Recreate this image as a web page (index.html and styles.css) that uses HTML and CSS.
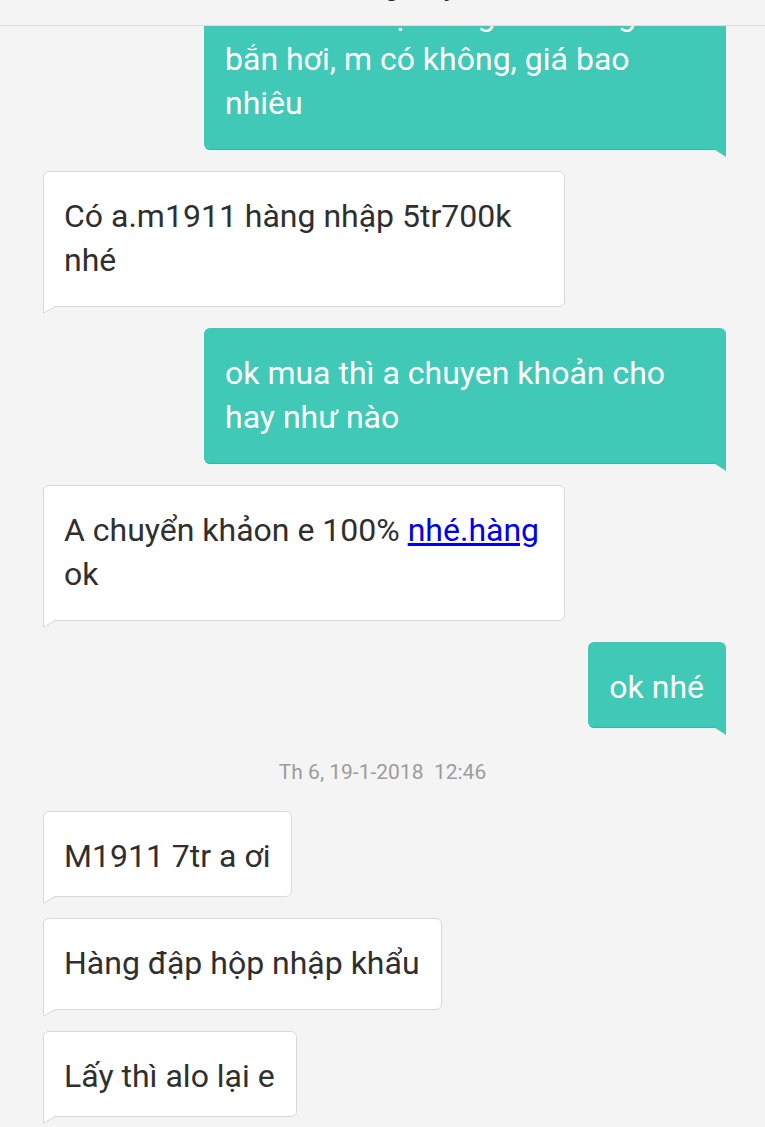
FILE: index.html
```html
<!DOCTYPE html>
<html lang="vi">
<head>
<meta charset="utf-8">
<title>Chat</title>
<link rel="stylesheet" href="styles.css">
</head>
<body>
<header class="topbar"><div class="topbar-text">Ừ, anh muốn hỏi xem súng này ạ, mình</div></header>
<main class="chat">
  <div class="row out">
    <div class="bubble sent tall">Cho a hỏi loại súng nào dùng<br>bắn hơi, m có không, giá bao<br>nhiêu<svg class="tail" width="14" height="9" viewBox="0 0 14 9"><polygon points="0,0 14,0 14,9" /></svg></div>
  </div>
  <div class="row in">
    <div class="bubble recv tall">Có a.m1911 hàng nhập 5tr700k<br>nhé<svg class="tail" width="14" height="9" viewBox="0 0 14 9"><polygon points="0.5,0 13.5,0 0.5,8" /><path d="M0.5,0 V8 L13,1.5" /></svg></div>
  </div>
  <div class="row out">
    <div class="bubble sent tall">ok mua thì a chuyen khoản cho<br>hay như nào<svg class="tail" width="14" height="9" viewBox="0 0 14 9"><polygon points="0,0 14,0 14,9" /></svg></div>
  </div>
  <div class="row in">
    <div class="bubble recv tall">A chuyển khảon e 100% <a class="link" href="#">nhé.hàng</a><br>ok<svg class="tail" width="14" height="9" viewBox="0 0 14 9"><polygon points="0.5,0 13.5,0 0.5,8" /><path d="M0.5,0 V8 L13,1.5" /></svg></div>
  </div>
  <div class="row out">
    <div class="bubble sent">ok nhé<svg class="tail" width="14" height="9" viewBox="0 0 14 9"><polygon points="0,0 14,0 14,9" /></svg></div>
  </div>
  <div class="stamp">Th 6, 19-1-2018&nbsp;&nbsp;12:46</div>
  <div class="row in">
    <div class="bubble recv">M1911 7tr a ơi<svg class="tail" width="14" height="9" viewBox="0 0 14 9"><polygon points="0.5,0 13.5,0 0.5,8" /><path d="M0.5,0 V8 L13,1.5" /></svg></div>
  </div>
  <div class="row in">
    <div class="bubble recv deep">Hàng đập hộp nhập khẩu<svg class="tail" width="14" height="9" viewBox="0 0 14 9"><polygon points="0.5,0 13.5,0 0.5,8" /><path d="M0.5,0 V8 L13,1.5" /></svg></div>
  </div>
  <div class="row in">
    <div class="bubble recv">Lấy thì alo lại e<svg class="tail" width="14" height="9" viewBox="0 0 14 9"><polygon points="0.5,0 13.5,0 0.5,8" /><path d="M0.5,0 V8 L13,1.5" /></svg></div>
  </div>
</main>
</body>
</html>
```
FILE: styles.css
```css
html, body {
  margin: 0;
  padding: 0;
  background: #f4f4f4;
  height: 100%;
  overflow: hidden;
}
body {
  font-family: Roboto, "Noto Sans", sans-serif;
  position: relative;
}
.topbar {
  position: absolute;
  top: 0;
  left: 0;
  right: 0;
  height: 25px;
  background: #f4f4f4;
  border-bottom: 1px solid #dcdfde;
  overflow: hidden;
  z-index: 2;
}
.topbar-text {
  font-size: 32px;
  line-height: 44px;
  color: #222;
  margin-top: -38px;
  padding-left: 24px;
  white-space: nowrap;
}
.chat {
  display: flex;
  flex-direction: column;
  gap: 21px;
  margin-top: -30px;
}
.row {
  display: flex;
}
.row.out {
  justify-content: flex-end;
  padding-right: 39px;
}
.row.in {
  justify-content: flex-start;
  padding-left: 43px;
}
.bubble {
  position: relative;
  padding: 22px 21px 18px 20px;
  font-size: 32px;
  line-height: 44px;
  border-radius: 6px;
  border: 1px solid transparent;
  white-space: nowrap;
}
.bubble.tall {
  width: 479px;
  padding-bottom: 24px;
}
.bubble.deep {
  padding-bottom: 24px;
}
.sent {
  background: #40c9b7;
  border-color: #40c9b7;
  border-bottom-color: #37b6a5;
  color: #ffffff;
  border-bottom-right-radius: 0;
}
.recv {
  background: #ffffff;
  border-color: #d9d9d9;
  color: #2f2f2f;
  border-bottom-left-radius: 0;
}
.tail {
  position: absolute;
  bottom: -8px;
  display: block;
}
.sent .tail {
  right: -1px;
}
.sent .tail polygon {
  fill: #40c9b7;
}
.recv .tail {
  left: -1px;
}
.recv .tail polygon {
  fill: #ffffff;
}
.recv .tail path {
  fill: none;
  stroke: #d9d9d9;
  stroke-width: 1;
}
.link {
  color: #0000ee;
  text-decoration: underline;
}
.stamp {
  text-align: center;
  font-size: 21px;
  line-height: 36px;
  padding-top: 5px;
  height: 36px;
  color: #9c9c9c;
}
```
